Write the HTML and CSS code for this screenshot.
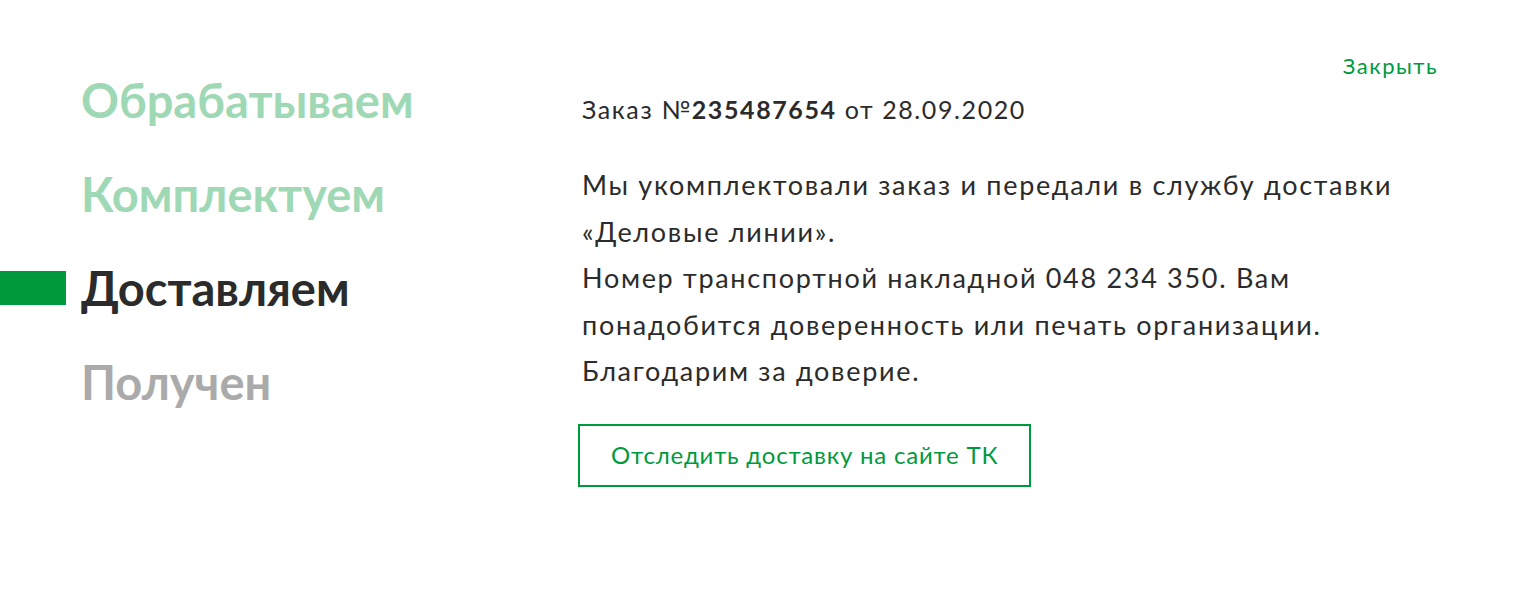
FILE: index.html
```
<!DOCTYPE html>
<html lang="ru">
<head>
<meta charset="utf-8">
<link rel="stylesheet" href="styles.css">
</head>
<body>
<div class="page">
  <ul class="steps">
    <li class="step step-done">Обрабатываем</li>
    <li class="step step-done">Комплектуем</li>
    <li class="step step-active">Доставляем</li>
    <li class="step step-todo">Получен</li>
  </ul>
  <div class="details">
    <div class="top-bar"><a class="close" href="#">Закрыть</a></div>
    <p class="order">Заказ №<b>235487654</b> от 28.09.2020</p>
    <p class="message">Мы укомплектовали заказ и передали в службу доставки<br>«Деловые линии».<br>Номер транспортной накладной 048 234 350. Вам<br>понадобится доверенность или печать организации.<br>Благодарим за доверие.</p>
    <a class="track" href="#">Отследить доставку на сайте ТК</a>
  </div>
</div>
</body>
</html>
```
FILE: styles.css
```
html, body {
  margin: 0;
  padding: 0;
  background: #ffffff;
}
body {
  font-family: Lato, "Noto Sans", sans-serif;
  color: #2b2b2b;
}
.page {
  display: flex;
  padding: 0 81px 0 0;
}
.steps {
  list-style: none;
  margin: 0;
  padding: 76px 0 0 0;
  width: 582px;
  flex: none;
  display: flex;
  flex-direction: column;
  gap: 46px;
}
.step {
  display: flex;
  align-items: center;
  gap: 15px;
  font-size: 47px;
  font-weight: 700;
  line-height: 48px;
}
.step::before {
  content: "";
  width: 66px;
  height: 34px;
  flex: none;
}
.step-done { color: #9ed8b4; }
.step-active { color: #2b2b2b; }
.step-active::before { background: #009a3e; }
.step-todo { color: #aaaaaa; }
.details {
  flex: 1;
  display: flex;
  flex-direction: column;
  align-items: flex-start;
}
.top-bar {
  align-self: stretch;
  display: flex;
  justify-content: flex-end;
  padding-top: 52px;
}
.close {
  color: #009a3e;
  text-decoration: none;
  font-size: 22px;
  letter-spacing: 1.5px;
  line-height: 28px;
  margin-right: -1px;
}
.order {
  margin: 14px 0 0 0;
  font-size: 25px;
  letter-spacing: 1.6px;
  line-height: 30px;
}
.order b { font-weight: 700; }
.message {
  margin: 38px 0 0 0;
  font-size: 27px;
  letter-spacing: 1.7px;
  line-height: 46.5px;
  white-space: nowrap;
}
.track {
  margin: 29px 0 0 -4px;
  display: inline-block;
  border: 2px solid #009a3e;
  color: #009a3e;
  text-decoration: none;
  font-size: 24px;
  letter-spacing: 0.8px;
  line-height: 28px;
  padding: 15px 31px 16px;
}
```
